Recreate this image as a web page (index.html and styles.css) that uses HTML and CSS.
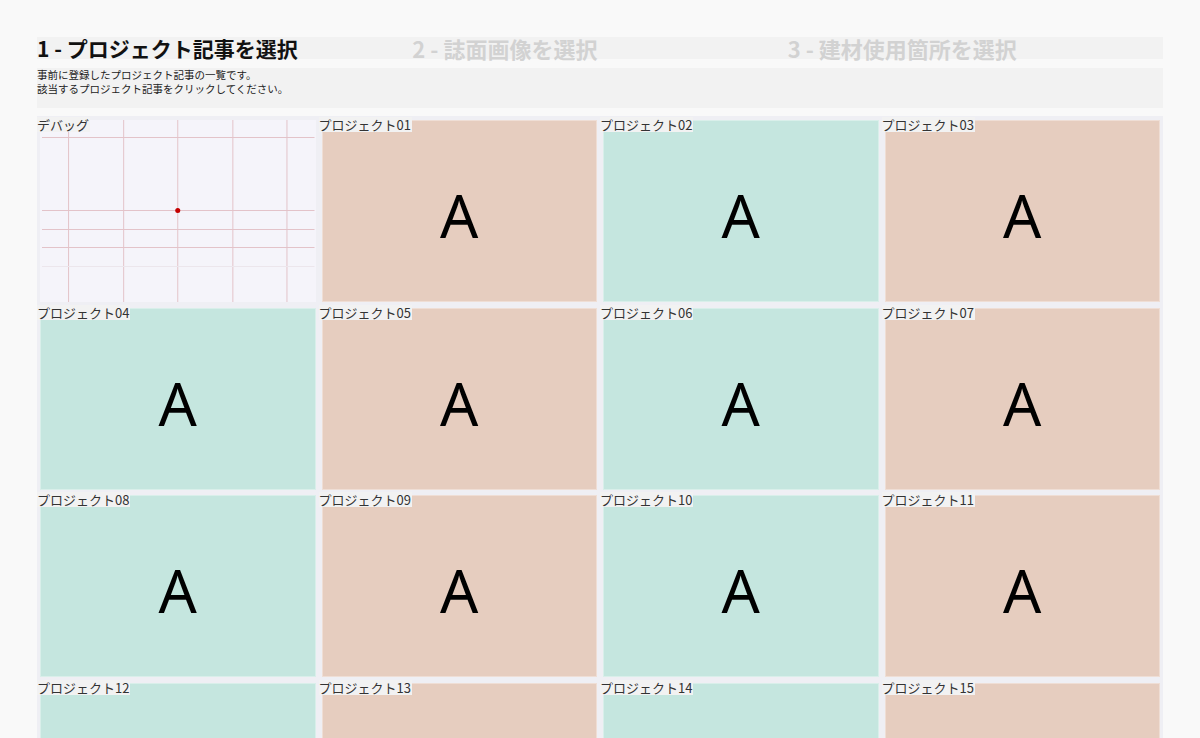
FILE: index.html
```html
<!DOCTYPE html>
<html lang="ja">
<head>
  <meta charset="UTF-8">
  <title>プロジェクト記事を選択</title>
  <link rel="stylesheet" href="styles.css">
</head>
<body>
  <main class="page">
    <nav class="steps">
      <div class="step active">1 - プロジェクト記事を選択</div>
      <div class="step">2 - 誌面画像を選択</div>
      <div class="step">3 - 建材使用箇所を選択</div>
    </nav>

    <div class="note">
      事前に登録したプロジェクト記事の一覧です。<br>
      該当するプロジェクト記事をクリックしてください。
    </div>

    <div class="grid">
      <div class="cell">
        <span class="label">デバッグ</span>
        <div class="thumb debug">
          <svg width="100%" height="100%" viewBox="0 0 275 182" preserveAspectRatio="none">
            <g stroke="#e3c3c9" stroke-width="1">
              <line x1="2" y1="17.5" x2="274" y2="17.5"/>
              <line x1="2" y1="90.5" x2="274" y2="90.5"/>
              <line x1="2" y1="109.5" x2="274" y2="109.5"/>
              <line x1="2" y1="127.5" x2="274" y2="127.5"/>
              <line x1="28.5" y1="0" x2="28.5" y2="182"/>
              <line x1="83.5" y1="0" x2="83.5" y2="182"/>
              <line x1="137.5" y1="0" x2="137.5" y2="182"/>
              <line x1="192.5" y1="0" x2="192.5" y2="182"/>
              <line x1="246.5" y1="0" x2="246.5" y2="182"/>
            </g>
            <line x1="2" y1="146.5" x2="274" y2="146.5" stroke="#ece6ec" stroke-width="1"/>
            <circle cx="137.5" cy="90.5" r="2.5" fill="#c40000"/>
          </svg>
        </div>
      </div>
      <div class="cell"><span class="label">プロジェクト01</span><div class="thumb peach">A</div></div>
      <div class="cell"><span class="label">プロジェクト02</span><div class="thumb mint">A</div></div>
      <div class="cell"><span class="label">プロジェクト03</span><div class="thumb peach">A</div></div>
      <div class="cell"><span class="label">プロジェクト04</span><div class="thumb mint">A</div></div>
      <div class="cell"><span class="label">プロジェクト05</span><div class="thumb peach">A</div></div>
      <div class="cell"><span class="label">プロジェクト06</span><div class="thumb mint">A</div></div>
      <div class="cell"><span class="label">プロジェクト07</span><div class="thumb peach">A</div></div>
      <div class="cell"><span class="label">プロジェクト08</span><div class="thumb mint">A</div></div>
      <div class="cell"><span class="label">プロジェクト09</span><div class="thumb peach">A</div></div>
      <div class="cell"><span class="label">プロジェクト10</span><div class="thumb mint">A</div></div>
      <div class="cell"><span class="label">プロジェクト11</span><div class="thumb peach">A</div></div>
      <div class="cell"><span class="label">プロジェクト12</span><div class="thumb mint">A</div></div>
      <div class="cell"><span class="label">プロジェクト13</span><div class="thumb peach">A</div></div>
      <div class="cell"><span class="label">プロジェクト14</span><div class="thumb mint">A</div></div>
      <div class="cell"><span class="label">プロジェクト15</span><div class="thumb peach">A</div></div>
    </div>
  </main>
</body>
</html>
```

FILE: styles.css
```css
body {
  margin: 0;
  background: #f9f9f9;
  color: #222;
  font-family: "Noto Sans CJK JP", "Noto Sans", sans-serif;
}

.page {
  width: 1126px;
  padding: 37px 37px 0;
}

.steps {
  display: grid;
  grid-template-columns: repeat(3, 1fr);
  height: 22px;
  background: #f2f2f2;
}

.step {
  font-size: 22px;
  font-weight: 700;
  line-height: 22px;
  color: #d2d2d2;
  white-space: nowrap;
}

.step.active {
  font-size: 21px;
  color: #111;
}

.note {
  margin-top: 9px;
  height: 40px;
  background: #f2f2f2;
  font-size: 10.5px;
  line-height: 14px;
  color: #222;
}

.grid {
  display: grid;
  grid-template-columns: repeat(4, 1fr);
  margin-top: 8px;
  background: #efeff4;
}

.cell {
  position: relative;
  padding: 3px 3px 2px;
  height: 187.5px;
  box-sizing: border-box;
}

.label {
  position: absolute;
  top: 1px;
  left: 0;
  padding-right: 1px;
  background: #f2f2f2;
  color: #333;
  font-size: 13px;
  line-height: 15px;
  white-space: nowrap;
}

.thumb {
  height: 182px;
  margin-top: 1px;
  box-sizing: border-box;
  border: 1px solid rgba(255, 255, 255, 0.35);
  display: flex;
  align-items: center;
  justify-content: center;
  padding-top: 8px;
  font-family: "Noto Sans", "Open Sans", sans-serif;
  font-size: 60px;
  color: #000;
}

.thumb.peach {
  background: #e6cdbf;
}

.thumb.mint {
  background: #c5e6df;
}

.thumb.debug {
  background: #f5f4fa;
  padding: 0;
  border: none;
}

.thumb.debug svg {
  display: block;
}
```
